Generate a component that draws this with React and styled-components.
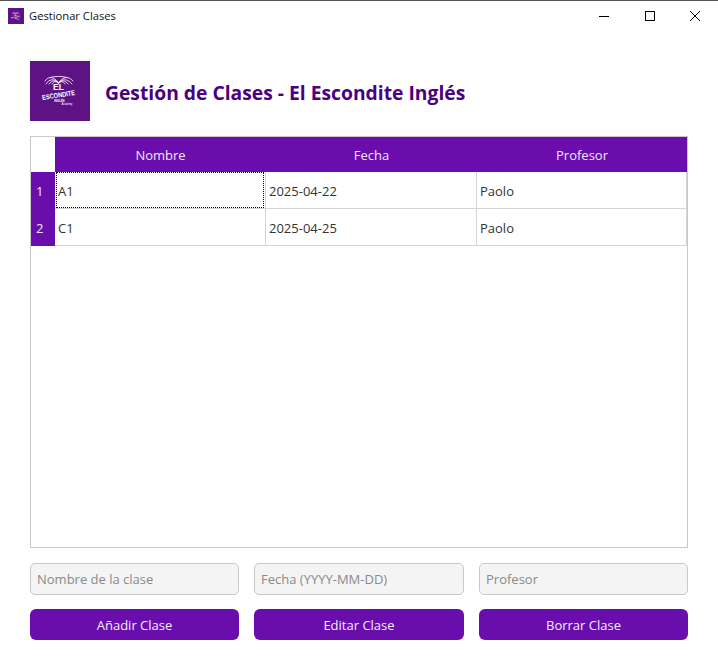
import React from 'react';
import styled, { createGlobalStyle } from 'styled-components';

const purple = '#6a0dad';
const uiFont = '"Open Sans", "Noto Sans", sans-serif';

const GlobalStyle = createGlobalStyle`
  html, body { margin: 0; padding: 0; background: #fff; }
  body { font-family: ${uiFont}; }
`;

const Window = styled.div`
  width: 718px;
  height: 669px;
  display: flex;
  flex-direction: column;
  background: #fff;
  border-top: 1px solid #555;
  box-sizing: border-box;
  overflow: hidden;
`;

const TitleBar = styled.div`
  height: 30px;
  display: flex;
  align-items: center;
  padding-left: 8px;
  flex-shrink: 0;
`;

const WindowTitle = styled.span`
  font-size: 11.2px;
  color: #111;
  flex: 1;
  margin: 0 0 2px 5px;
`;

const WinButton = styled.div`
  width: 45.5px;
  height: 30px;
  display: flex;
  align-items: center;
  justify-content: center;
`;

const Content = styled.div`
  flex: 1;
  display: flex;
  flex-direction: column;
  padding: 30px 30px 29px;
`;

const Header = styled.div`
  display: flex;
  align-items: center;
  gap: 15px;
  height: 60px;
  margin-bottom: 15px;
`;

const Title = styled.h1`
  margin: 2px 0 0;
  font-size: 19.3px;
  font-weight: 700;
  color: #4b0082;
`;

const Table = styled.div`
  height: 412px;
  box-sizing: border-box;
  border: 1px solid #c8c8c8;
  display: grid;
  grid-template-columns: 24px 211px 211px 1fr;
  grid-template-rows: 35px 37px 37px;
  align-content: start;
`;

const Corner = styled.div`
  background: #fff;
`;

const HeadCell = styled.div`
  background: ${purple};
  color: #f0e6f8;
  font-size: 13px;
  display: flex;
  align-items: center;
  justify-content: center;
`;

const RowHead = styled.div`
  background: ${purple};
  color: #f0e6f8;
  font-size: 13px;
  display: flex;
  align-items: center;
  padding: 1px 0 0 5px;
`;

const Cell = styled.div`
  position: relative;
  box-sizing: border-box;
  border-right: 1px solid #d4d4d4;
  border-bottom: 1px solid #d4d4d4;
  color: #333;
  font-size: 13px;
  display: flex;
  align-items: center;
  padding: 2px 0 0 3px;
  ${(p) => p.$focused && `
    &::after {
      content: '';
      position: absolute;
      inset: 0 1px 0 1px;
      border: 1px dotted #000;
    }
  `}
`;

const FormGrid = styled.div`
  display: grid;
  grid-template-columns: 209px 210px 209px;
  column-gap: 15px;
  row-gap: 14px;
  margin-top: 15px;
`;

const Input = styled.input`
  height: 32px;
  width: 100%;
  box-sizing: border-box;
  padding: 0 6px;
  border: 1px solid #c8c8c8;
  border-radius: 5px;
  background: #f4f4f4;
  font-family: ${uiFont};
  font-size: 13px;
  outline: none;
  &::placeholder { color: #8a8a8a; opacity: 1; }
`;

const Button = styled.button`
  height: 31px;
  border: none;
  border-radius: 6px;
  background: ${purple};
  color: #f5eefa;
  font-family: ${uiFont};
  font-size: 13px;
  padding: 0;
`;

const LogoBox = styled.svg`
  display: block;
  flex-shrink: 0;
`;

const Logo = ({ size }) => (
  <LogoBox width={size} height={size} viewBox="0 0 60 60">
    <rect width="60" height="60" fill="#5f1283" />
    <g stroke="#f3e9f6" strokeWidth="0.9" fill="none" strokeLinecap="round">
      <path d="M28.5 22 C24 15 18 15 15 20" />
      <path d="M28.5 22 C24 17 19 18 16 23" />
      <path d="M28.5 22 C25 19 22 19 19 23" />
      <path d="M28.5 22 C26 20 24 20 22 23" />
      <path d="M28.5 22 C33 15 39 15 43 20" />
      <path d="M28.5 22 C33 17 38 18 42 23" />
      <path d="M28.5 22 C32 19 35 19 38 23" />
      <path d="M28.5 22 C31 20 33 20 35 23" />
      <path d="M20 16.5 C25 15 32 15 37 16.5" />
    </g>
    <g fill="#fff" fontFamily='"Liberation Sans", sans-serif' fontWeight="700" textAnchor="middle">
      <text x="28.5" y="29" fontSize="8.5">EL</text>
      <text x="28.5" y="36.5" fontSize="7" textLength="33" lengthAdjust="spacingAndGlyphs" transform="rotate(-9 28.5 34)">ESCONDITE</text>
      <text x="29.5" y="40.5" fontSize="2.8">INGLÉS</text>
      <text x="37" y="43.5" fontSize="2.6" fontWeight="400">Academy</text>
    </g>
  </LogoBox>
);

const rows = [
  ['A1', '2025-04-22', 'Paolo'],
  ['C1', '2025-04-25', 'Paolo'],
];

const App = () => (
  <>
    <GlobalStyle />
    <Window>
      <TitleBar>
        <Logo size={16} />
        <WindowTitle>Gestionar Clases</WindowTitle>
        <WinButton>
          <svg width="10" height="10" viewBox="0 0 10 10"><path d="M0 5.5H10" stroke="#000" /></svg>
        </WinButton>
        <WinButton>
          <svg width="10" height="10" viewBox="0 0 10 10"><rect x=".5" y=".5" width="9" height="9" fill="none" stroke="#000" /></svg>
        </WinButton>
        <WinButton>
          <svg width="10" height="10" viewBox="0 0 10 10"><path d="M0 0L10 10M10 0L0 10" stroke="#000" /></svg>
        </WinButton>
      </TitleBar>
      <Content>
        <Header>
          <Logo size={60} />
          <Title>Gestión de Clases - El Escondite Inglés</Title>
        </Header>
        <Table>
          <Corner />
          <HeadCell>Nombre</HeadCell>
          <HeadCell>Fecha</HeadCell>
          <HeadCell>Profesor</HeadCell>
          {rows.map((row, i) => (
            <React.Fragment key={row[0]}>
              <RowHead>{i + 1}</RowHead>
              {row.map((value, j) => (
                <Cell key={j} $focused={i === 0 && j === 0}>{value}</Cell>
              ))}
            </React.Fragment>
          ))}
        </Table>
        <FormGrid>
          <Input placeholder="Nombre de la clase" />
          <Input placeholder="Fecha (YYYY-MM-DD)" />
          <Input placeholder="Profesor" />
          <Button>Añadir Clase</Button>
          <Button>Editar Clase</Button>
          <Button>Borrar Clase</Button>
        </FormGrid>
      </Content>
    </Window>
  </>
);

export default App;
